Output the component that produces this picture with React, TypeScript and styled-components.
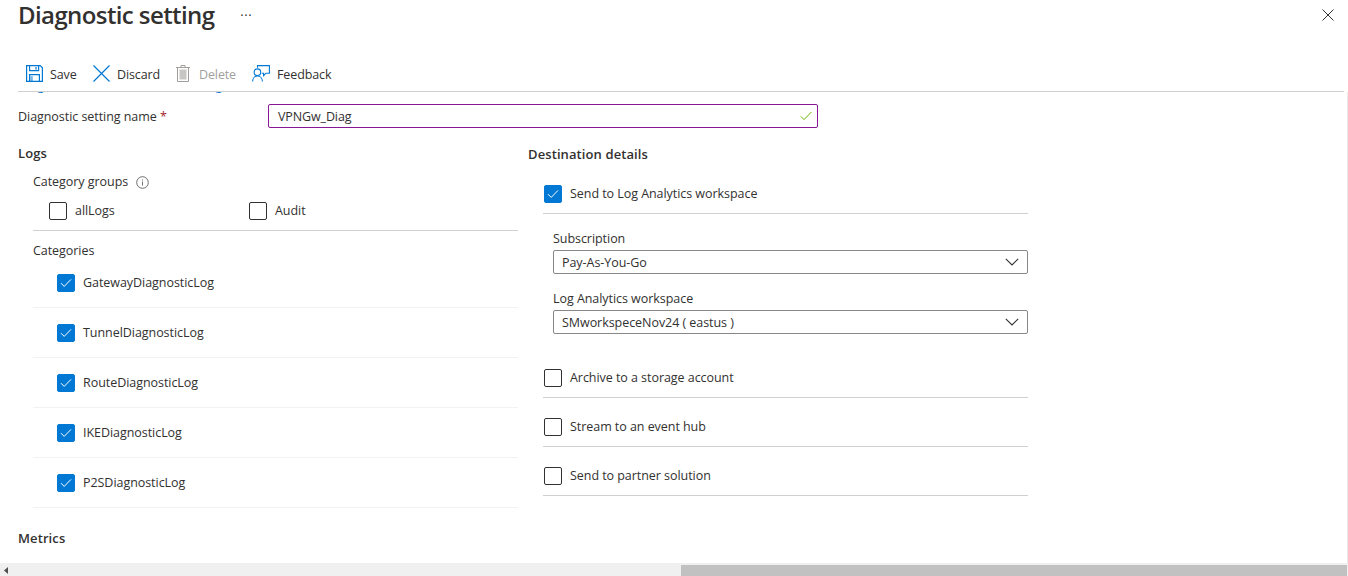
import React from "react";
import styled, { createGlobalStyle } from "styled-components";

const Global = createGlobalStyle`
  html, body { margin: 0; padding: 0; background: #fff; height: 100%; overflow: hidden; }
  body { font-family: "Open Sans", "Noto Sans", "Liberation Sans", sans-serif; color: #323130; font-size: 12.5px; }
  * { box-sizing: border-box; }
`;

const Page = styled.div`
  width: 1348px; height: 576px; display: flex; flex-direction: column; background: #fff; overflow: hidden;
`;
const Header = styled.header`
  height: 30px; padding: 0 14px 0 18px; display: flex; align-items: center; flex: none;
`;
const Title = styled.h1`
  margin: 0; font-size: 24px; line-height: 30px; font-weight: 600; color: #323130; letter-spacing: -0.6px;
`;
const More = styled.span`
  margin-left: 26px; font-size: 13px; line-height: 12px; letter-spacing: 0.5px; color: #323130; height: 12px;
`;
const CloseBtn = styled.button`
  margin-left: auto; border: 0; background: none; padding: 0; display: flex; width: 12px; height: 12px;
`;
const Toolbar = styled.nav`
  margin-top: 30px; height: 32px; margin-left: 18px; margin-right: 4px; padding: 0 0 5px 8px; display: flex; align-items: center; flex: none;
  border-bottom: 1px solid #d2d0ce;
`;
const ToolItem = styled.div<{ $w: number; $off?: boolean }>`
  width: ${p => p.$w}px; display: flex; align-items: center; gap: 7px; white-space: nowrap;
  color: ${p => (p.$off ? "#a19f9d" : "#323130")};
`;
const ToolLabel = styled.span`
  padding-top: 4px; font-size: 12.5px; line-height: 18px; letter-spacing: -0.12px;
`;
const Body = styled.main`
  flex: 1; min-height: 0; overflow: hidden; padding: 0 0 0 18px;
  border-right: 1px solid #edebe9;
`;
const ClipWindow = styled.div`
  height: 3px; overflow: hidden;
`;
const Clipped = styled.p`
  margin: -15px 0 0; height: 18px; line-height: 18px; font-size: 12.5px; color: #0078d4; white-space: nowrap;
`;
const NameRow = styled.div`
  margin-top: 9px; display: flex; align-items: center; height: 24px;
`;
const NameLabel = styled.label`
  width: 250px; flex: none; letter-spacing: -0.05px; b { color: #a4262c; font-weight: 400; }
`;
const NameBox = styled.div`
  width: 550px; height: 24px; border: 1px solid #881798; border-radius: 2px; padding: 0 5px 0 9px; display: flex; align-items: center; justify-content: space-between;
  letter-spacing: -0.12px; line-height: 20px;
`;
const FieldValue = styled.span`
  padding-top: 2px;
`;
const Columns = styled.div`
  display: grid; grid-template-columns: 500px 510px; column-gap: 10px; margin-top: 16px;
`;
const SectionTitle = styled.h2`
  margin: 0; font-size: 13px; line-height: 18px; font-weight: 600; color: #323130; letter-spacing: 0.1px;
`;
const DestTitle = styled(SectionTitle)`
  margin-top: 1px;
`;
const LeftInner = styled.div`
  padding-left: 15px; margin-top: 11px;
`;
const SubLabel = styled.div`
  display: flex; align-items: center; gap: 8px; line-height: 18px; letter-spacing: -0.05px;
`;
const GroupRow = styled.div`
  display: grid; grid-template-columns: 200px 1fr; padding: 10px 0 10px 16px; border-bottom: 1px solid #d2d0ce; height: 40px;
`;
const Check = styled.div`
  display: flex; align-items: center; gap: 8px; line-height: 18px; letter-spacing: -0.05px;
`;
const Box = styled.span<{ $on?: boolean }>`
  width: 18px; height: 18px; border-radius: 2px; flex: none; display: flex; align-items: center; justify-content: center;
  background: ${p => (p.$on ? "#0078d4" : "#fff")};
  border: 1px solid ${p => (p.$on ? "#0078d4" : "#323130")};
`;
const CatLabel = styled(SubLabel)`
  margin-top: 11px;
`;
const CatRow = styled.div`
  height: 50px; padding-left: 24px; display: flex; align-items: center; border-bottom: 1px solid #f3f2f1;
  &:first-of-type { height: 48px; padding-bottom: 2px; }
`;
const Metrics = styled(SectionTitle)`
  margin-top: 21px;
`;
const DestInner = styled.div`
  padding-left: 15px; width: 500px; margin-top: 11px;
`;
const DestRow = styled.div`
  height: 40px; display: flex; align-items: center; border-bottom: 1px solid #d2d0ce; padding: 1px 0 0 1px;
  & + & { margin-top: 9px; }
`;
const Fields = styled.div`
  padding: 16px 0 24px 10px; display: flex; flex-direction: column; gap: 16px;
`;
const Field = styled.div`
  display: flex; flex-direction: column; gap: 2px;
`;
const FieldLabel = styled.label`
  line-height: 18px; letter-spacing: -0.05px;
`;
const Select = styled.div`
  height: 24px; border: 1px solid #8a8886; border-radius: 2px; padding: 0 8px; display: flex; align-items: center; justify-content: space-between; letter-spacing: -0.05px; line-height: 20px;
`;
const ScrollBar = styled.div`
  height: 13px; flex: none; background: #f0f0f0; display: flex; align-items: flex-end;
`;
const ArrowBtn = styled.span`
  width: 681px; height: 11px; display: flex; align-items: center; padding-left: 4px;
`;
const Thumb = styled.div`
  width: 666px; height: 11px; background: #c1c1c1;
`;

const Tick = () => (
  <svg width="12" height="10" viewBox="0 0 12 10" fill="none"><path d="M1 5.2 4.2 8.4 11 1.4" stroke="#fff" strokeWidth="1" /></svg>
);
const Chevron = () => (
  <svg width="14" height="8" viewBox="0 0 14 8" fill="none"><path d="M.8.8 7 7 13.2.8" stroke="#323130" strokeWidth="1.1" /></svg>
);
const CheckBox = ({ on }: { on?: boolean }) => <Box $on={on}>{on && <Tick />}</Box>;

const SaveIcon = () => (
  <svg width="17" height="17" viewBox="0 0 17 17" fill="none" stroke="#0078d4" strokeWidth="1.2">
    <path d="M.6.6h13.6l2.2 2.2v13.6H.6z" />
    <path d="M3.6.8v4.8h9V.8M3.6 16.2V9.6h9.8v6.6" />
    <path d="M10 2v2.4" />
    <path d="M5.6 11.2v5" strokeWidth="2.4" opacity=".55" />
  </svg>
);
const XIcon = ({ size, color, w }: { size: number; color: string; w: number }) => (
  <svg width={size} height={size} viewBox={`0 0 ${size} ${size}`} fill="none">
    <path d={`M.5.5 ${size - 0.5} ${size - 0.5}M${size - 0.5}.5 .5 ${size - 0.5}`} stroke={color} strokeWidth={w} />
  </svg>
);
const TrashIcon = () => (
  <svg width="16" height="17" viewBox="0 0 16 17" fill="none" stroke="#a19f9d">
    <path d="M0 2.5h14M5 2.5V.5h4v2" />
    <path d="M1.5 2.5v14h11v-14" />
    <rect x="3.5" y="4.5" width="7" height="10" fill="#c8c6c4" stroke="none" />
  </svg>
);
const FeedbackIcon = () => (
  <svg width="18" height="17" viewBox="0 0 18 17" fill="none" stroke="#0078d4" strokeWidth="1.1">
    <circle cx="5.4" cy="7.2" r="3.3" />
    <path d="M.6 16.6c0-3.4 2.2-5.6 4.9-5.6s4.9 2.2 4.9 5.6" />
    <path d="M5.5 2.8V.6h11.9v7.6H14l-2.4 2.4V8.2h-1.8" />
  </svg>
);
const InfoIcon = () => (
  <svg width="13" height="13" viewBox="0 0 13 13" fill="none" stroke="#605e5c" strokeWidth=".9">
    <circle cx="6.5" cy="6.5" r="5.8" />
    <path d="M6.5 5.6v4M6.5 3.4v1.1" />
  </svg>
);

const categories = ["GatewayDiagnosticLog", "TunnelDiagnosticLog", "RouteDiagnosticLog", "IKEDiagnosticLog", "P2SDiagnosticLog"];

export default function App() {
  return (
    <Page>
      <Global />
      <Header>
        <Title>Diagnostic setting</Title>
        <More>···</More>
        <CloseBtn aria-label="Close"><XIcon size={12} color="#323130" w={1} /></CloseBtn>
      </Header>
      <Toolbar>
        <ToolItem $w={67}><SaveIcon /><ToolLabel>Save</ToolLabel></ToolItem>
        <ToolItem $w={83}><XIcon size={17} color="#0078d4" w={1.2} /><ToolLabel>Discard</ToolLabel></ToolItem>
        <ToolItem $w={76} $off><TrashIcon /><ToolLabel>Delete</ToolLabel></ToolItem>
        <ToolItem $w={90}><FeedbackIcon /><ToolLabel>Feedback</ToolLabel></ToolItem>
      </Toolbar>
      <Body>
        <ClipWindow>
          <Clipped>Diagnostic and metric details of logs</Clipped>
        </ClipWindow>
        <NameRow>
          <NameLabel>Diagnostic setting name <b>*</b></NameLabel>
          <NameBox>
            <FieldValue>VPNGw_Diag</FieldValue>
            <svg width="12" height="10" viewBox="0 0 12 10" fill="none"><path d="M.8 5.4 4 8.6 11.4 1" stroke="#6bb700" strokeWidth="1" /></svg>
          </NameBox>
        </NameRow>
        <Columns>
          <section>
            <SectionTitle>Logs</SectionTitle>
            <LeftInner>
              <SubLabel>Category groups <InfoIcon /></SubLabel>
              <GroupRow>
                <Check><CheckBox /> allLogs</Check>
                <Check><CheckBox /> Audit</Check>
              </GroupRow>
              <CatLabel>Categories</CatLabel>
              <div>
                {categories.map(c => (
                  <CatRow key={c}><Check><CheckBox on /> {c}</Check></CatRow>
                ))}
              </div>
            </LeftInner>
            <Metrics>Metrics</Metrics>
          </section>
          <section>
            <DestTitle>Destination details</DestTitle>
            <DestInner>
              <DestRow><Check><CheckBox on /> Send to Log Analytics workspace</Check></DestRow>
              <Fields>
                <Field>
                  <FieldLabel>Subscription</FieldLabel>
                  <Select><FieldValue>Pay-As-You-Go</FieldValue> <Chevron /></Select>
                </Field>
                <Field>
                  <FieldLabel>Log Analytics workspace</FieldLabel>
                  <Select><FieldValue>SMworkspeceNov24 ( eastus )</FieldValue> <Chevron /></Select>
                </Field>
              </Fields>
              <DestRow><Check><CheckBox /> Archive to a storage account</Check></DestRow>
              <DestRow><Check><CheckBox /> Stream to an event hub</Check></DestRow>
              <DestRow><Check><CheckBox /> Send to partner solution</Check></DestRow>
            </DestInner>
          </section>
        </Columns>
      </Body>
      <ScrollBar>
        <ArrowBtn><svg width="4" height="7" viewBox="0 0 4 7"><path d="M4 0v7L0 3.5z" fill="#505050" /></svg></ArrowBtn>
        <Thumb />
      </ScrollBar>
    </Page>
  );
}
